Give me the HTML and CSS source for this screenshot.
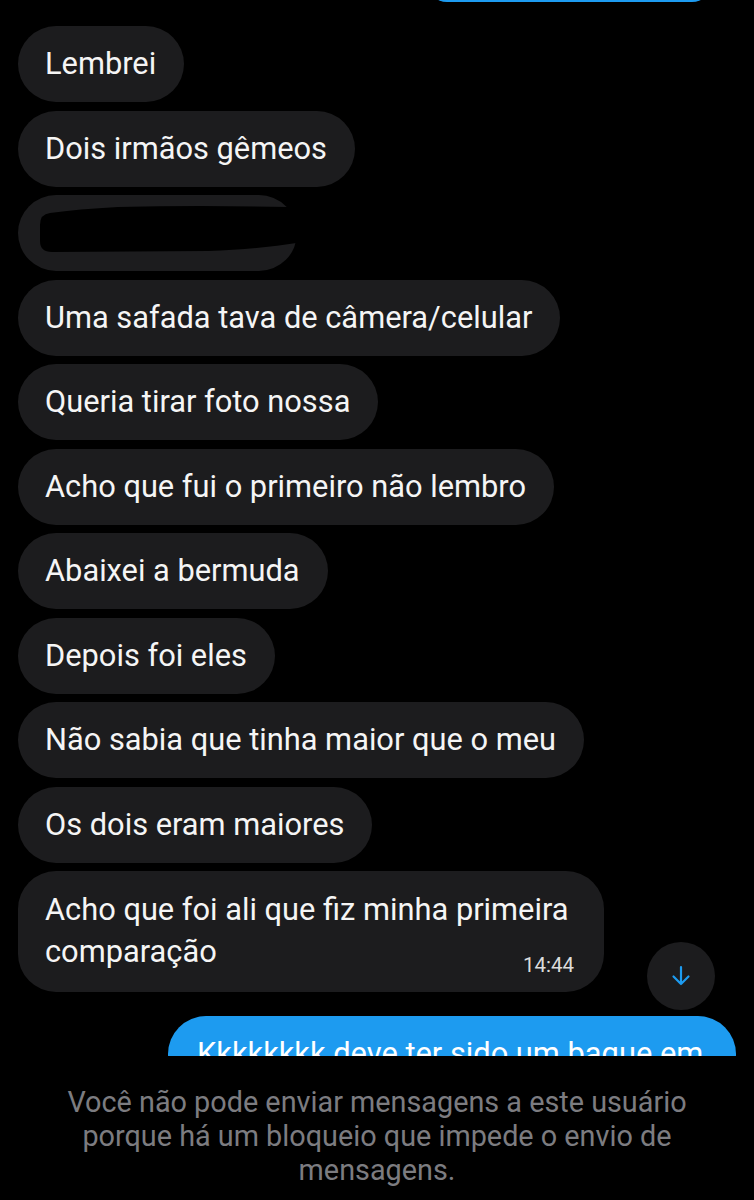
FILE: index.html
```html
<!DOCTYPE html>
<html>
<head>
    <meta charset="UTF-8">
    <title>Mensagens</title>
    <link rel="stylesheet" href="styles.css">
</head>
<body>
    <div class="chat">
        <div class="thread">
            <div class="msg sent cut-top"></div>

            <div class="msg recv">Lembrei</div>
            <div class="msg recv">Dois irmãos gêmeos</div>
            <div class="msg recv redacted">
                <svg width="280" height="76" viewBox="0 0 280 76">
                    <rect x="0" y="0" width="279" height="76" rx="38" fill="#1c1c1e"/>
                    <path d="M32 18 Q22 19 22 30 L22 46 Q22 57 34 57 L190 56 Q245 54 284 47 L284 13 L270 12 Q180 10 100 12 Q60 14 32 18 Z" fill="#000"/>
                </svg>
            </div>
            <div class="msg recv">Uma safada tava de câmera/celular</div>
            <div class="msg recv">Queria tirar foto nossa</div>
            <div class="msg recv">Acho que fui o primeiro não lembro</div>
            <div class="msg recv">Abaixei a bermuda</div>
            <div class="msg recv">Depois foi eles</div>
            <div class="msg recv">Não sabia que tinha maior que o meu</div>
            <div class="msg recv">Os dois eram maiores</div>
            <div class="msg recv last">
                <span class="msg-text">Acho que foi ali que fiz minha primeira comparação</span>
                <span class="time">14:44</span>
            </div>

            <div class="msg sent wrap">Kkkkkkkk deve ter sido um baque em</div>
        </div>

        <button class="scroll-down" aria-label="Ir para o fim">
            <svg width="22" height="22" viewBox="0 0 22 22">
                <path d="M11 2 V19 M3.5 11.5 L11 19 L18.5 11.5" fill="none" stroke="#1d9bf0" stroke-width="2.2" stroke-linecap="round" stroke-linejoin="round"/>
            </svg>
        </button>
    </div>

    <footer class="blocked">
        Você não pode enviar mensagens a este usuário porque há um bloqueio que impede o envio de mensagens.
    </footer>
</body>
</html>
```

FILE: styles.css
```css
* {
    margin: 0;
    padding: 0;
    box-sizing: border-box;
    font-family: Roboto, "Liberation Sans", sans-serif;
}

body {
    background-color: #000;
    color: #fff;
    width: 754px;
    height: 1200px;
    overflow: hidden;
}

.chat {
    position: relative;
    height: 1056px;
    overflow: hidden;
}

.thread {
    display: flex;
    flex-direction: column;
    align-items: flex-start;
    gap: 8.5px;
    padding: 0 18px;
}

.msg {
    font-size: 30.8px;
    line-height: 36px;
    padding: 20px 28px 20px 27px;
    border-radius: 38px;
    white-space: nowrap;
}

.recv {
    background-color: #1c1c1e;
    color: #f5f5f5;
}

.sent {
    align-self: flex-end;
    background-color: #1d9bf0;
    color: #fff;
    margin-top: 15.5px;
}

.wrap {
    width: 568px;
    line-height: 42px;
    padding: 17px 28px 17px 29px;
}

.cut-top {
    width: 285px;
    height: 40px;
    margin-top: -38px;
    margin-right: 24px;
    margin-bottom: 15.5px;
    padding: 0;
}

.redacted {
    background: none;
    padding: 0;
    height: 76px;
    line-height: 0;
}

.last {
    max-width: 586px;
    white-space: normal;
    line-height: 42px;
    padding: 18px 30px 15px 27px;
}

.time {
    display: block;
    text-align: right;
    font-size: 20.5px;
    line-height: 24px;
    margin-top: -20px;
    color: #dcdcdc;
}

.scroll-down {
    position: absolute;
    top: 942px;
    right: 39px;
    width: 68px;
    height: 68px;
    border: none;
    border-radius: 50%;
    background-color: #1c1c1e;
    display: flex;
    align-items: center;
    justify-content: center;
    cursor: pointer;
}

.blocked {
    padding: 29px 50px 0;
    text-align: center;
    font-size: 28.8px;
    line-height: 34px;
    color: #7c7c80;
}
```
